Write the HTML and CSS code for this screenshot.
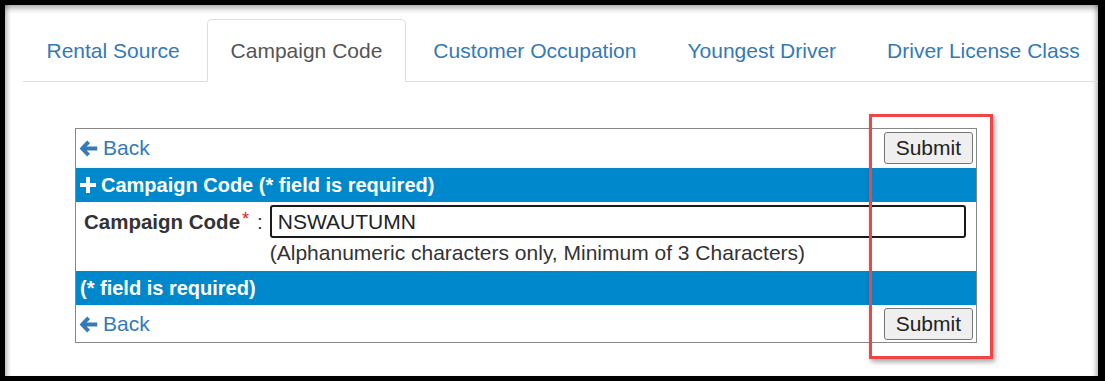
FILE: index.html
```html
<!DOCTYPE html>
<html lang="en">
<head>
    <meta charset="UTF-8">
    <meta name="viewport" content="width=device-width, initial-scale=1.0">
    <title>Campaign Code</title>
    <link rel="stylesheet" href="styles.css">
</head>
<body>
    <div class="screen">
        <!-- Tabs -->
        <ul class="nav-tabs">
            <li><a>Rental Source</a></li>
            <li class="active"><a>Campaign Code</a></li>
            <li><a>Customer Occupation</a></li>
            <li><a>Youngest Driver</a></li>
            <li><a>Driver License Class</a></li>
        </ul>

        <div class="form-box">
            <div class="action-row top">
                <a class="back-link">
                    <svg class="arrow" viewBox="0 0 20 20"><path d="M8.6 1.6 L0.6 10 L8.6 18.4 L11.6 15.6 L8 12.1 H19.2 V7.9 H8 L11.6 4.4 Z"/></svg>
                    Back
                </a>
                <button class="submit-btn">Submit</button>
            </div>

            <div class="section-bar">
                <svg class="plus" viewBox="0 0 16 16"><path d="M6 0 H10 V6 H16 V10 H10 V16 H6 V10 H0 V6 H6 Z"/></svg>
                Campaign Code (* field is required)
            </div>

            <div class="field-row">
                <label class="field-label" for="campaign-code">Campaign Code<span class="req">*</span><span class="colon">:</span></label>
                <div class="field-col">
                    <input type="text" id="campaign-code" class="text-input" value="NSWAUTUMN">
                    <div class="help-text">(Alphanumeric characters only, Minimum of 3 Characters)</div>
                </div>
            </div>

            <div class="section-bar plain">(* field is required)</div>

            <div class="action-row bottom">
                <a class="back-link">
                    <svg class="arrow" viewBox="0 0 20 20"><path d="M8.6 1.6 L0.6 10 L8.6 18.4 L11.6 15.6 L8 12.1 H19.2 V7.9 H8 L11.6 4.4 Z"/></svg>
                    Back
                </a>
                <button class="submit-btn">Submit</button>
            </div>
        </div>

        <!-- annotation box -->
        <div class="highlight"></div>
    </div>
</body>
</html>
```

FILE: styles.css
```css
body {
    margin: 0;
    background-color: #000;
    font-family: 'Liberation Sans', Arial, sans-serif;
    color: #333;
}

.screen {
    position: relative;
    margin: 5px 7px 0 5px;
    height: 371px;
    padding: 14px 0 0 18px;
    box-sizing: border-box;
    background-color: #fff;
    box-shadow: inset 0 8px 6px -5px rgba(0, 0, 0, 0.35),
                inset 6px 0 5px -4px rgba(0, 0, 0, 0.3),
                inset -6px 0 5px -4px rgba(0, 0, 0, 0.3);
    overflow: hidden;
}

.nav-tabs {
    display: flex;
    list-style: none;
    margin: 0;
    padding: 0;
    border-bottom: 1px solid #ddd;
}

.nav-tabs li {
    flex-shrink: 0;
    margin-right: 4px;
    margin-bottom: -1px;
}

.nav-tabs a {
    display: block;
    padding: 16px 22.5px 15px;
    font-size: 21px;
    line-height: 30px;
    white-space: nowrap;
    color: #337ab7;
    border: 1px solid transparent;
    border-radius: 5px 5px 0 0;
    cursor: pointer;
}

.nav-tabs .active a {
    color: #555;
    background-color: #fff;
    border-color: #ddd;
    border-bottom-color: transparent;
}

.form-box {
    width: 902px;
    box-sizing: border-box;
    margin: 46px 0 0 52px;
    border: 1px solid #888;
}

.action-row {
    display: flex;
    justify-content: space-between;
    align-items: center;
    padding: 3px 3px 4px 3px;
}

.action-row.bottom {
    padding: 3px 3px 2px 3px;
}

.back-link {
    display: flex;
    align-items: center;
    gap: 5px;
    font-size: 21px;
    color: #337ab7;
    cursor: pointer;
}

.arrow {
    width: 19px;
    height: 19px;
    fill: #337ab7;
}

.submit-btn {
    font-family: 'Liberation Sans', Arial, sans-serif;
    font-size: 21px;
    line-height: 28px;
    padding: 1px 11px;
    color: #222;
    background-color: #efefef;
    border: 1px solid #767676;
    border-radius: 3px;
}

.section-bar {
    display: flex;
    align-items: center;
    gap: 5px;
    height: 34px;
    padding-left: 4px;
    background-color: #0088cc;
    color: #fff;
    font-size: 20px;
    font-weight: bold;
}

.plus {
    width: 16px;
    height: 16px;
    fill: #fff;
}

.field-row {
    display: flex;
    padding: 3px 10px 3px 8px;
}

.field-label {
    font-size: 20.5px;
    font-weight: bold;
    line-height: 33px;
    color: #333;
}

.req {
    color: #e02020;
    font-size: 18px;
    font-weight: normal;
    vertical-align: top;
    line-height: 28px;
    margin-left: 2px;
}

.colon {
    font-weight: normal;
    margin: 0 7px 0 8px;
}

.field-col {
    flex: 1;
}

.text-input {
    display: block;
    width: 100%;
    height: 33px;
    box-sizing: border-box;
    padding: 0 6px;
    font-family: 'Liberation Sans', Arial, sans-serif;
    font-size: 21px;
    color: #222;
    border: 2px solid #1a1a1a;
    border-radius: 3px;
    outline: none;
}

.help-text {
    font-size: 21px;
    line-height: 30px;
    color: #333;
}

.highlight {
    position: absolute;
    left: 864px;
    top: 109px;
    width: 124px;
    height: 245px;
    box-sizing: border-box;
    border: 3px solid #f04545;
    box-shadow: 2px 3px 5px rgba(0, 0, 0, 0.35);
}
```
